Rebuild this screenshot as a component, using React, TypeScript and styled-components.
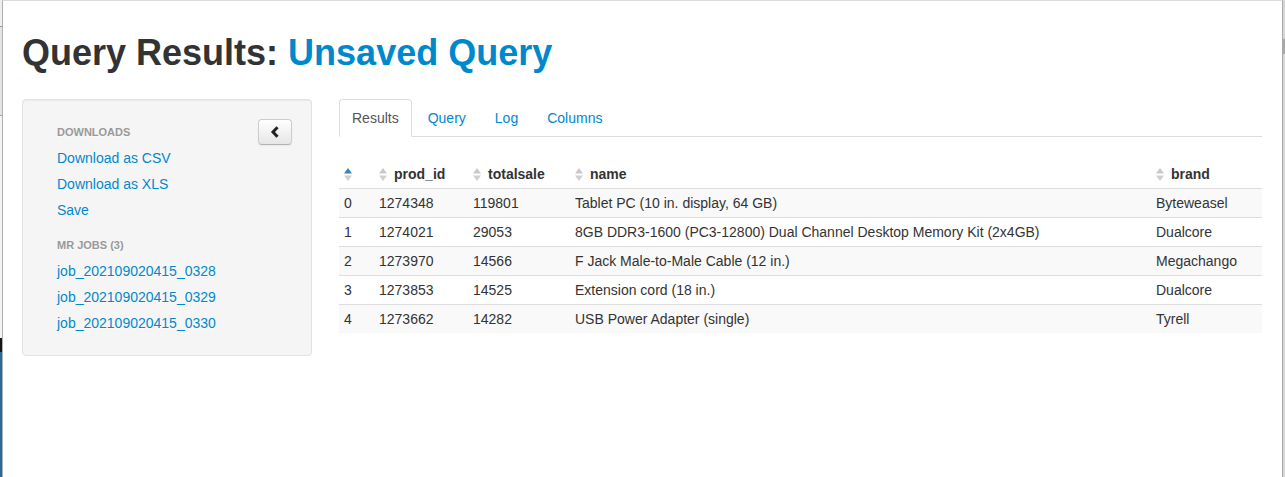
import React from "react";
import styled, { createGlobalStyle } from "styled-components";

const GlobalStyle = createGlobalStyle`
  html, body { margin: 0; padding: 0; background: #fff; overflow: hidden; }
  body { font-family: "Liberation Sans", Helvetica, Arial, sans-serif; font-size: 14px; color: #333; }
  * { box-sizing: border-box; }
`;

const Page = styled.div`
  display: flex;
  width: 1285px;
  height: 477px;
`;

const BackdropStrip = styled.div`
  width: 2px;
  flex: none;
  background: linear-gradient(
    to bottom,
    #eeeeee 0,
    #eeeeee 26px,
    #9a9a9a 26px,
    #9a9a9a 27px,
    #e4e4e4 27px,
    #e4e4e4 115px,
    #a0a0a0 115px,
    #a0a0a0 116px,
    #f4f4f4 116px,
    #f4f4f4 338px,
    #151515 338px,
    #151515 352px,
    #2a6b96 352px,
    #2a6b96 100%
  );
`;

const ScrollStrip = styled.div`
  width: 2px;
  flex: none;
  display: flex;
  flex-direction: column;
  background: #d6d6d6;
`;

const ScrollThumb = styled.div`
  margin-top: 39px;
  height: 15px;
  background: #a9a9a9;
`;

const Modal = styled.div`
  flex: 1;
  background: #fff;
  border-left: 1px solid #b0b0b0;
  border-right: 1px solid #a8a8a8;
  border-top: 1px solid #dcdcdc;
  padding: 32px 20px 0 19px;
`;

const Title = styled.h1`
  margin: 0 0 26px;
  font-size: 36px;
  line-height: 40px;
  font-weight: bold;
  color: #333;
  letter-spacing: 0;
`;

const TitleAccent = styled.span`
  color: #0088cc;
`;

const Body = styled.div`
  display: flex;
  align-items: flex-start;
  gap: 27px;
`;

const Well = styled.div`
  width: 290px;
  flex: none;
  display: flex;
  align-items: flex-start;
  padding: 19px;
  background: #f5f5f5;
  border: 1px solid #e3e3e3;
  border-radius: 4px;
  box-shadow: inset 0 1px 1px rgba(0, 0, 0, 0.05);
`;

const NavList = styled.ul`
  flex: 1;
  list-style: none;
  margin: 0;
  padding: 0;
`;

const NavHeader = styled.li<{ $spaced?: boolean }>`
  padding: 3px 15px;
  margin-top: ${(p) => (p.$spaced ? "9px" : "0")};
  font-size: 11px;
  line-height: 20px;
  font-weight: bold;
  color: #999;
  text-transform: uppercase;
  text-shadow: 0 1px 0 rgba(255, 255, 255, 0.5);
`;

const NavItem = styled.li`
  padding: 3px 15px;
  line-height: 20px;
  font-size: 14px;
  color: #0088cc;
  text-shadow: 0 1px 0 rgba(255, 255, 255, 0.5);
`;

const CollapseButton = styled.button`
  width: 34px;
  height: 26px;
  flex: none;
  padding: 0;
  display: flex;
  align-items: center;
  justify-content: center;
  background: linear-gradient(to bottom, #ffffff, #e6e6e6);
  border: 1px solid #cccccc;
  border-bottom-color: #b3b3b3;
  border-radius: 4px;
  box-shadow: inset 0 1px 0 rgba(255, 255, 255, 0.2), 0 1px 2px rgba(0, 0, 0, 0.05);
`;

const Content = styled.div`
  flex: 1;
  min-width: 0;
`;

const Tabs = styled.ul`
  display: flex;
  list-style: none;
  margin: 0;
  padding: 0;
  border-bottom: 1px solid #ddd;
`;

const Tab = styled.li<{ $active?: boolean }>`
  margin-right: 3px;
  margin-bottom: -1px;
  padding: 8px 12px;
  line-height: 20px;
  font-size: 14px;
  border: 1px solid ${(p) => (p.$active ? "#ddd" : "transparent")};
  border-bottom-color: ${(p) => (p.$active ? "#fff" : "transparent")};
  border-radius: 4px 4px 0 0;
  background: ${(p) => (p.$active ? "#fff" : "transparent")};
  color: ${(p) => (p.$active ? "#555" : "#0088cc")};
`;

const Table = styled.table`
  width: 100%;
  margin-top: 23px;
  border-collapse: collapse;
  table-layout: fixed;
`;

const HeadCell = styled.th`
  padding: 4px 5px;
  height: 28px;
  line-height: 20px;
  font-size: 14px;
  font-weight: bold;
  color: #333;
  text-align: left;
  vertical-align: bottom;
  border-bottom: 1px solid #ddd;
  white-space: nowrap;
`;

const HeadInner = styled.div`
  display: flex;
  align-items: center;
  gap: 7px;
  height: 20px;
`;

const Row = styled.tr`
  &:nth-child(odd) td {
    background: #f9f9f9;
  }
`;

const Cell = styled.td`
  padding: 4px 5px;
  line-height: 20px;
  font-size: 14px;
  color: #333;
  border-top: 1px solid #ddd;
  white-space: nowrap;
  overflow: hidden;
`;

const SortIcon: React.FC<{ active?: boolean }> = ({ active }) => (
  <svg width="8" height="13" viewBox="0 0 8 13" style={{ flex: "none" }}>
    <polygon points="4,0 8,5.5 0,5.5" fill={active ? "#3d7fbf" : "#c9c9c9"} />
    <polygon points="0,7.5 8,7.5 4,13" fill="#d0d0d0" />
  </svg>
);

const ChevronLeft = () => (
  <svg width="10" height="12" viewBox="0 0 10 12">
    <path d="M7.5 1.2 L3 6 L7.5 10.8" fill="none" stroke="#222" strokeWidth="3" strokeLinejoin="miter" />
  </svg>
);

const columns = [
  { key: "", width: 35, active: true },
  { key: "prod_id", width: 94 },
  { key: "totalsale", width: 102 },
  { key: "name", width: 581 },
  { key: "brand", width: undefined as number | undefined },
];

const rows = [
  ["0", "1274348", "119801", "Tablet PC (10 in. display, 64 GB)", "Byteweasel"],
  ["1", "1274021", "29053", "8GB DDR3-1600 (PC3-12800) Dual Channel Desktop Memory Kit (2x4GB)", "Dualcore"],
  ["2", "1273970", "14566", "F Jack Male-to-Male Cable (12 in.)", "Megachango"],
  ["3", "1273853", "14525", "Extension cord (18 in.)", "Dualcore"],
  ["4", "1273662", "14282", "USB Power Adapter (single)", "Tyrell"],
];

export default function App() {
  return (
    <>
      <GlobalStyle />
      <Page>
        <BackdropStrip />
        <Modal>
          <Title>
            Query Results: <TitleAccent>Unsaved Query</TitleAccent>
          </Title>
          <Body>
            <Well>
              <NavList>
                <NavHeader>Downloads</NavHeader>
                <NavItem>Download as CSV</NavItem>
                <NavItem>Download as XLS</NavItem>
                <NavItem>Save</NavItem>
                <NavHeader $spaced>MR Jobs (3)</NavHeader>
                <NavItem>job_202109020415_0328</NavItem>
                <NavItem>job_202109020415_0329</NavItem>
                <NavItem>job_202109020415_0330</NavItem>
              </NavList>
              <CollapseButton aria-label="Collapse">
                <ChevronLeft />
              </CollapseButton>
            </Well>
            <Content>
              <Tabs>
                <Tab $active>Results</Tab>
                <Tab>Query</Tab>
                <Tab>Log</Tab>
                <Tab>Columns</Tab>
              </Tabs>
              <Table>
                <colgroup>
                  {columns.map((c, i) => (
                    <col key={i} style={c.width ? { width: c.width } : undefined} />
                  ))}
                </colgroup>
                <thead>
                  <tr>
                    {columns.map((c, i) => (
                      <HeadCell key={i}>
                        <HeadInner>
                          <SortIcon active={c.active} />
                          {c.key && <span>{c.key}</span>}
                        </HeadInner>
                      </HeadCell>
                    ))}
                  </tr>
                </thead>
                <tbody>
                  {rows.map((r, i) => (
                    <Row key={i}>
                      {r.map((v, j) => (
                        <Cell key={j}>{v}</Cell>
                      ))}
                    </Row>
                  ))}
                </tbody>
              </Table>
            </Content>
          </Body>
        </Modal>
        <ScrollStrip>
          <ScrollThumb />
        </ScrollStrip>
      </Page>
    </>
  );
}
